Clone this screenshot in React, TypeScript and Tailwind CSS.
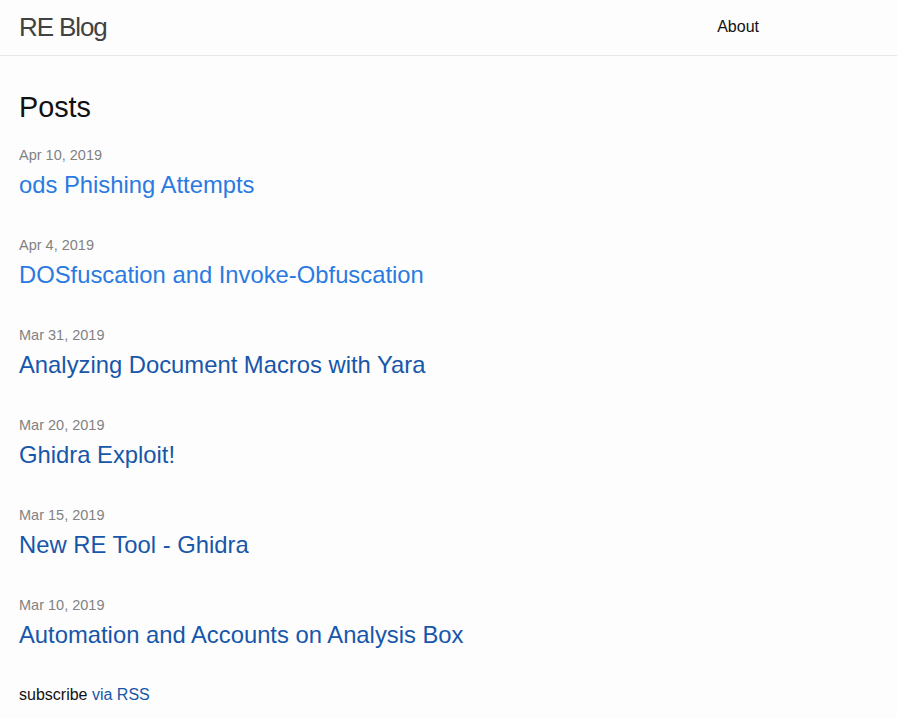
import React from 'react';

const POSTS = [
    { date: 'Apr 10, 2019', title: 'ods Phishing Attempts', visited: false },
    { date: 'Apr 4, 2019', title: 'DOSfuscation and Invoke-Obfuscation', visited: false },
    { date: 'Mar 31, 2019', title: 'Analyzing Document Macros with Yara', visited: true },
    { date: 'Mar 20, 2019', title: 'Ghidra Exploit!', visited: true },
    { date: 'Mar 15, 2019', title: 'New RE Tool - Ghidra', visited: true },
    { date: 'Mar 10, 2019', title: 'Automation and Accounts on Analysis Box', visited: true },
];

export default function App() {
    return (
        <div className="min-h-[718px] bg-[#fdfdfd] text-[#111] font-['Liberation_Sans',Arial,sans-serif] text-[16px]">
            <header className="h-[56px] border-b border-[#e8e8e8]">
                <div className="w-[759px] pl-[19px] flex justify-between">
                    <a className="text-[26px] leading-[54px] tracking-[-1.1px] text-[#424242]" href="#">RE Blog</a>
                    <nav className="leading-[54px]">
                        <a className="text-[#111]" href="#">About</a>
                    </nav>
                </div>
            </header>

            <main className="pt-[30px] pl-[19px] w-[759px]">
                <h2 className="text-[28.8px] leading-[42px] mb-[15px]">Posts</h2>
                <ul>
                    {POSTS.map((post) => (
                        <li key={post.title} className="mb-[30px]">
                            <div className="text-[14.5px] leading-[24px] text-[#828282]">{post.date}</div>
                            <h3 className="text-[23.8px] leading-[36px]">
                                <a
                                    href="#"
                                    className={post.visited ? 'text-[#1756a9]' : 'text-[#2a7ae2]'}
                                >
                                    {post.title}
                                </a>
                            </h3>
                        </li>
                    ))}
                </ul>
                <p className="leading-[24px]">
                    subscribe <a href="#" className="text-[#1756a9]">via RSS</a>
                </p>
            </main>
        </div>
    );
}
